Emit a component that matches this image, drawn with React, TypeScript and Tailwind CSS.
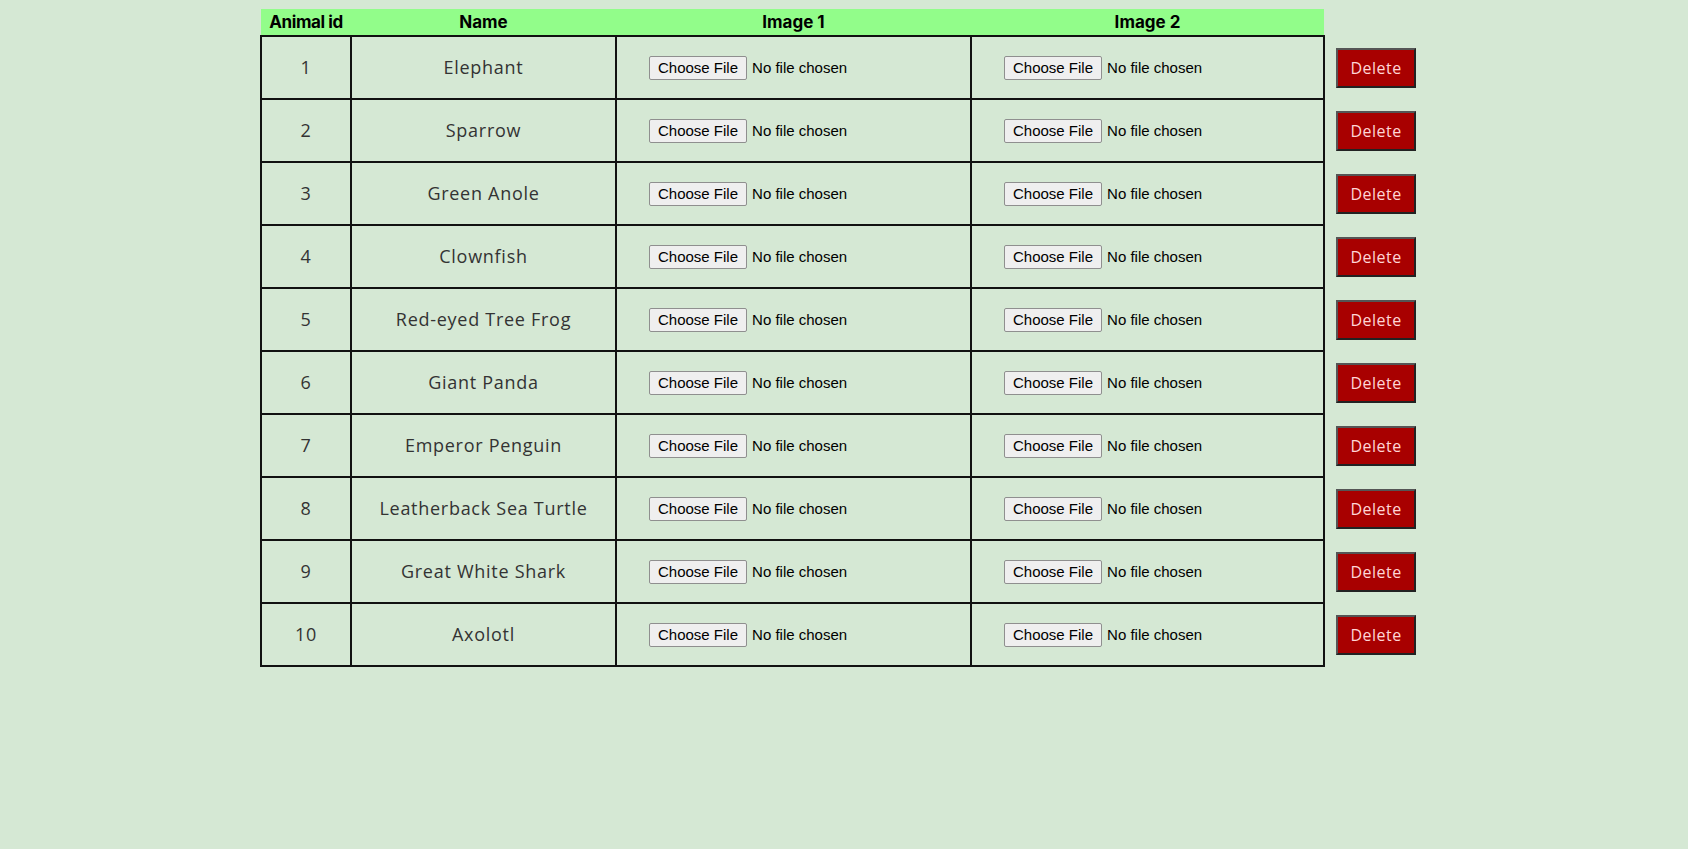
const animals = [
  'Elephant',
  'Sparrow',
  'Green Anole',
  'Clownfish',
  'Red-eyed Tree Frog',
  'Giant Panda',
  'Emperor Penguin',
  'Leatherback Sea Turtle',
  'Great White Shark',
  'Axolotl',
];

function FileCell() {
  return (
    <td className="border-2 border-[#111] pl-[32px] align-middle">
      <input
        type="file"
        className="text-[15px] leading-[18px] text-black [font-family:'Liberation_Sans',Arial,sans-serif] file:mr-[5px] file:border file:border-[#8f8f8f] file:rounded-[2px] file:bg-[#efefef] file:px-[8px] file:py-[2px] file:leading-[18px] file:text-black"
      />
    </td>
  );
}

export default function App() {
  return (
    <div className="min-h-[849px] w-full bg-[#d5e8d4] pt-[9px] pl-[260px]">
      <table className="border-collapse [font-family:'Open_Sans',sans-serif] text-[#333]">
        <thead>
          <tr className="h-[27px] text-[17px] font-bold text-black [font-family:Inter,sans-serif]">
            <th className="w-[90px] bg-[#92fd8a] p-0 leading-none tracking-tight">Animal id</th>
            <th className="w-[265px] bg-[#92fd8a] p-0 leading-none">Name</th>
            <th className="w-[355px] bg-[#92fd8a] p-0 leading-none">Image 1</th>
            <th className="w-[353px] bg-[#92fd8a] p-0 leading-none">Image 2</th>
            <th className="p-0"></th>
          </tr>
        </thead>
        <tbody>
          {animals.map((name, i) => (
            <tr key={name} className="h-[63px]">
              <td className="border-2 border-[#111] text-center text-[18px] tracking-[0.04em] text-[#333]">{i + 1}</td>
              <td className="border-2 border-[#111] text-center text-[18px] tracking-[0.04em] text-[#333]">{name}</td>
              <FileCell />
              <FileCell />
              <td className="pl-[11px] align-middle">
                <button className="h-[40px] w-[80px] border-2 border-t-[#555] border-l-[#555] border-r-[#222] border-b-[#222] bg-[#a80000] text-[16px] tracking-[0.03em] text-[#ffd6d6]">
                  Delete
                </button>
              </td>
            </tr>
          ))}
        </tbody>
      </table>
    </div>
  );
}
